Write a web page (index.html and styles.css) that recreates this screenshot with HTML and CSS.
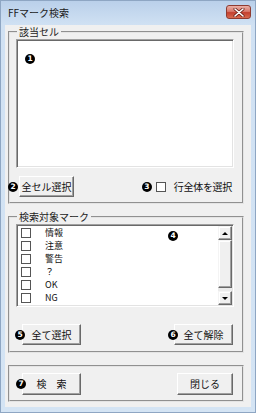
FILE: index.html
```html
<!DOCTYPE html>
<html lang="ja">
<head>
<meta charset="utf-8">
<title>FFマーク検索</title>
<link rel="stylesheet" href="styles.css">
</head>
<body>
<div class="window">
  <div class="titlebar">
    <span class="title">FFマーク検索</span>
    <div class="close">
      <svg width="12" height="9" viewBox="0 0 12 9"><path d="M2 1 L10 8 M10 1 L2 8" stroke="#6b2018" stroke-width="3" stroke-linecap="round"/><path d="M2 1 L10 8 M10 1 L2 8" stroke="#fff" stroke-width="1.6" stroke-linecap="round"/></svg>
    </div>
  </div>
  <div class="client">
    <fieldset class="group g1">
      <legend>該当セル</legend>
      <div class="textbox"><span class="badge">1</span></div>
      <div class="row r1">
        <div class="side"><span class="badge b2">2</span><button class="btn w-allcell">全セル選択</button></div>
        <div class="side right-opt"><span class="badge b3">3</span><span class="check"></span><span class="opt-label">行全体を選択</span></div>
      </div>
    </fieldset>
    <fieldset class="group g2">
      <legend>検索対象マーク</legend>
      <div class="listbox">
        <ul class="items">
          <li><span class="check"></span>情報</li>
          <li><span class="check"></span>注意</li>
          <li><span class="check"></span>警告</li>
          <li><span class="check"></span>？</li>
          <li><span class="check"></span>OK</li>
          <li><span class="check"></span>NG</li>
        </ul>
        <div class="scrollbar">
          <div class="sb-btn"><span class="arrow up"></span></div>
          <div class="sb-thumb"></div>
          <div class="sb-track"></div>
          <div class="sb-btn"><span class="arrow down"></span></div>
        </div>
        <span class="badge b4">4</span>
      </div>
      <div class="row r2">
        <div class="side"><span class="badge b5">5</span><button class="btn w-left">全て選択</button></div>
        <div class="side"><span class="badge b6">6</span><button class="btn w-right">全て解除</button></div>
      </div>
    </fieldset>
    <fieldset class="group g3">
      <div class="row r3">
        <div class="side"><span class="badge b7">7</span><button class="btn w-left">検　索</button></div>
        <div class="side"><button class="btn w-close">閉じる</button></div>
      </div>
    </fieldset>
  </div>
</div>
</body>
</html>
```
FILE: styles.css
```css
* { box-sizing: border-box; }
html, body { margin: 0; padding: 0; }
body {
  width: 256px;
  height: 413px;
  overflow: hidden;
  font-family: "Noto Sans CJK JP", "Noto Sans", sans-serif;
  font-size: 10px;
  color: #111;
}
.window {
  width: 256px;
  height: 413px;
  border: 1px solid #8ea6c3;
  background: linear-gradient(#bad0ea 0, #d0e1f3 24px, #d4e4f4 100%);
  padding: 0 4px 5px;
  display: flex;
  flex-direction: column;
}
.titlebar {
  height: 24px;
  flex: none;
  display: flex;
  align-items: flex-start;
  justify-content: space-between;
}
.title {
  margin: 5px 0 0 3px;
  line-height: 13px;
  color: #1b1b1b;
}
.close {
  width: 25px;
  height: 14px;
  margin: 4px 0 0 0;
  border: 1px solid #8e3b31;
  border-radius: 3px;
  background: linear-gradient(#eab0a6 0, #d9786b 45%, #c4402f 55%, #d86a4f 100%);
  display: flex;
  align-items: center;
  justify-content: center;
}
.close svg { display: block; }
.client {
  flex: 1;
  background: #f0f0f0;
  padding: 0 7px 0 3px;
  display: flex;
  flex-direction: column;
}
.group {
  margin: 0;
  min-width: 0;
  border: 2px groove #e4e4e4;
  padding: 1px 8px 5px 6px;
}
.group legend {
  padding: 0 2px;
  margin-left: 1px;
  line-height: 13px;
  height: 13px;
  color: #1b1b1b;
}
.g2 { margin-top: 6px; padding-bottom: 6px; }
.g3 { margin-top: 12px; padding-top: 6px; padding-bottom: 5px; }
.textbox {
  height: 129px;
  background: #fff;
  border: 1px solid;
  border-color: #a0a0a0 #fff #fff #a0a0a0;
  box-shadow: inset 1px 1px 0 #696969, inset -1px -1px 0 #e3e3e3;
  padding: 9px 0 0 8px;
}
.badge {
  width: 10px;
  height: 10px;
  border-radius: 50%;
  background: #000;
  color: #fff;
  font-family: "DejaVu Sans", sans-serif;
  font-weight: bold;
  font-size: 7.5px;
  line-height: 10px;
  text-align: center;
  display: inline-block;
  flex: none;
  position: relative;
  z-index: 1;
}
.row {
  display: flex;
  align-items: center;
  justify-content: space-between;
}
.side { display: flex; align-items: center; }
.r1 { margin-top: 8px; }
.r2 { margin-top: 17px; }
.b2 { margin: 0 1px 0 -8px; }
.b3 { margin-right: 4px; }
.b5 { margin: 0 -3px 0 -1px; }
.b6 { margin-right: -4px; }
.b7 { margin: 0 -4px 0 0; }
.right-opt { padding-right: 2px; }
.opt-label { margin-left: 8px; letter-spacing: -0.3px; }
.btn {
  font: inherit;
  color: #111;
  height: 21px;
  padding: 0;
  margin: 0;
  background: #f0f0f0;
  border: 1px solid;
  border-color: #fff #696969 #696969 #fff;
  box-shadow: inset -1px -1px 0 #a0a0a0;
  text-align: center;
  line-height: 18px;
}
.w-allcell { width: 55px; }
.w-left { width: 59px; }
.w-right { width: 59px; margin-right: 1px; }
.w-close { width: 56px; margin-right: 1px; }
.r3 .btn { height: 22px; }
.check {
  width: 10px;
  height: 10px;
  border: 1px solid #555;
  background: #fff;
  display: inline-block;
  flex: none;
}
.listbox {
  position: relative;
  height: 83px;
  background: #fff;
  border: 1px solid;
  border-color: #a0a0a0 #fff #fff #a0a0a0;
  box-shadow: inset 1px 1px 0 #696969, inset -1px -1px 0 #e3e3e3;
  padding: 1px;
  display: flex;
}
.items {
  list-style: none;
  margin: 0;
  padding: 0;
  flex: 1;
  display: grid;
  grid-template-rows: repeat(6, 1fr);
  font-size: 9px;
}
.items li {
  display: flex;
  align-items: center;
  padding-left: 3px;
  line-height: 12px;
}
.items .check { margin-right: 14px; }
.scrollbar {
  width: 14px;
  flex: none;
  display: flex;
  flex-direction: column;
  background: #ebebeb;
}
.sb-btn, .sb-thumb {
  background: #f0f0f0;
  border: 1px solid;
  border-color: #f4f4f4 #696969 #696969 #f4f4f4;
  box-shadow: inset -1px -1px 0 #a0a0a0, inset 1px 1px 0 #fff;
}
.sb-btn {
  height: 14px;
  flex: none;
  display: flex;
  align-items: center;
  justify-content: center;
}
.sb-thumb { height: 48px; flex: none; }
.sb-track { flex: 1; }
.arrow {
  width: 0;
  height: 0;
  border-left: 3px solid transparent;
  border-right: 3px solid transparent;
}
.arrow.up { border-bottom: 3px solid #000; }
.arrow.down { border-top: 3px solid #000; }
.b4 {
  position: absolute;
  left: 151px;
  top: 6px;
}
```
